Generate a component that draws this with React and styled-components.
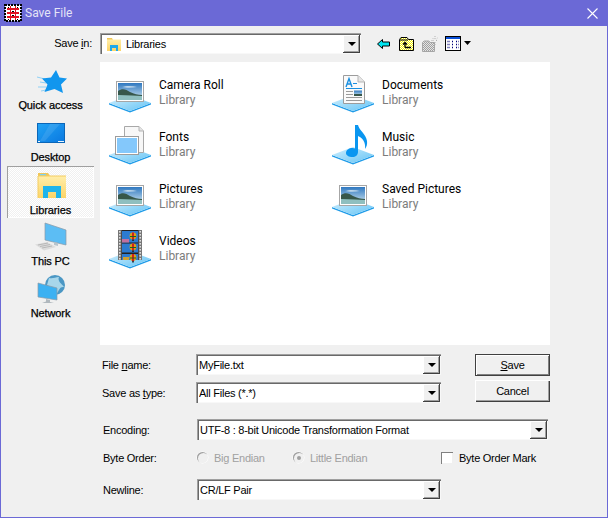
import React from 'react';
import styled, { createGlobalStyle } from 'styled-components';

const GlobalStyle = createGlobalStyle`
  html, body { margin: 0; padding: 0; background: #f0f0f0; }
  * { box-sizing: border-box; }
`;

const UI_FONT = `"Liberation Sans", Arial, sans-serif`;
const LIST_FONT = `Roboto, "Noto Sans", sans-serif`;

const SIDEBAR_ITEMS = [
  { name: 'Quick access', Icon: () => <StarIcon /> },
  { name: 'Desktop', Icon: () => <DesktopIcon /> },
  { name: 'Libraries', Icon: () => <LibraryIcon />, selected: true },
  { name: 'This PC', Icon: () => <PcIcon /> },
  { name: 'Network', Icon: () => <NetworkIcon /> },
];

const LIBRARIES = [
  { name: 'Camera Roll', Art: () => <PictureArt /> },
  { name: 'Documents', Art: () => <DocumentArt /> },
  { name: 'Fonts', Art: () => <FontsArt /> },
  { name: 'Music', Art: () => <MusicArt /> },
  { name: 'Pictures', Art: () => <PictureArt /> },
  { name: 'Saved Pictures', Art: () => <PictureArt /> },
  { name: 'Videos', Art: () => <VideoArt /> },
];

/* shared gradients and dither fills for the drawn icons */
const SharedDefs = () => (
  <Defs>
    <defs>
      <linearGradient id="platformTop" x1="0" y1="0" x2="1" y2="1">
        <stop offset="0" stopColor="#d3f0fd" />
        <stop offset="1" stopColor="#63c3f5" />
      </linearGradient>
      <linearGradient id="sky" x1="0" y1="0" x2="0" y2="1">
        <stop offset="0" stopColor="#2f78c0" />
        <stop offset="1" stopColor="#d5e9f2" />
      </linearGradient>
      <linearGradient id="screen" x1="0" y1="0" x2="1" y2="1">
        <stop offset="0" stopColor="#22a4f5" />
        <stop offset="1" stopColor="#0a78e0" />
      </linearGradient>
      <linearGradient id="folder" x1="0" y1="0" x2="0" y2="1">
        <stop offset="0" stopColor="#ffeeaa" />
        <stop offset="1" stopColor="#fcd467" />
      </linearGradient>
      <pattern id="ditherYellow" width="2" height="2" patternUnits="userSpaceOnUse">
        <rect width="2" height="2" fill="#fff" />
        <rect width="1" height="1" fill="#f2f000" />
        <rect x="1" y="1" width="1" height="1" fill="#f2f000" />
      </pattern>
      <pattern id="ditherGray" width="2" height="2" patternUnits="userSpaceOnUse">
        <rect width="2" height="2" fill="#e4e4e4" />
        <rect width="1" height="1" fill="#a0a0a0" />
        <rect x="1" y="1" width="1" height="1" fill="#a0a0a0" />
      </pattern>
    </defs>
  </Defs>
);

const Platform = () => (
  <>
    <path d="M3 33 L24 41 L45 33 L45 34.5 L24 42.5 L3 34.5 Z" fill="#1f9be8" />
    <path d="M3 33 L24 25 L45 33 L24 41 Z" fill="url(#platformTop)" />
  </>
);

const PictureArt = () => (
  <ItemSvg viewBox="0 0 48 46">
    <Platform />
    <rect x="10.5" y="11.5" width="27" height="20" fill="#fff" stroke="#a6a6a6" />
    <rect x="12" y="13" width="24" height="17" fill="url(#sky)" />
    <path d="M16 17 C20 15.5 26 15.5 31 17 C26 18 20 18 16 17 Z" fill="#e8f2f8" opacity="0.7" />
    <path d="M12 21 C16 18 20 19 24 22 C28 24 32 25 36 25 L36 27 L12 27 Z" fill="#37574a" />
    <path d="M12 25 L26 25.5 L36 26 L36 30 L12 30 Z" fill="#8fbfbf" />
  </ItemSvg>
);

const DocumentArt = () => (
  <ItemSvg viewBox="0 0 48 46">
    <Platform />
    <path d="M14.5 5.5 H29 L35.5 12 V33.5 H14.5 Z" fill="#fafafa" stroke="#9c9c9c" />
    <path d="M29 5.5 V12 H35.5" fill="#e6e6e6" stroke="#b5b5b5" />
    <path d="M17 17 L20 8.5 L23 17 M18 14 H22" fill="none" stroke="#1a8fe0" strokeWidth="1.4" />
    <path d="M24 13.5 H28 M17 18.5 H33" stroke="#1a8fe0" />
    <path d="M17 21.5 H24 M17 24.5 H24 M17 27.5 H33 M17 30.5 H33" stroke="#9a9a9a" />
    <rect x="25" y="20.5" width="8" height="5.5" fill="url(#sky)" />
    <rect x="25" y="24" width="8" height="2" fill="#37574a" />
  </ItemSvg>
);

const FontsArt = () => (
  <ItemSvg viewBox="0 0 48 46">
    <Platform />
    <path d="M18.5 4.5 H33 L37.5 9 V30.5 H18.5 Z" fill="#f7f7f7" stroke="#a8a8a8" />
    <path d="M33 4.5 V9 H37.5" fill="#e4e4e4" stroke="#b5b5b5" />
    <rect x="9.5" y="14.5" width="23" height="18" fill="#fff" stroke="#9c9c9c" />
    <rect x="11" y="16" width="20" height="15" fill="#84c8fb" />
  </ItemSvg>
);

const MusicArt = () => (
  <ItemSvg viewBox="0 0 48 46">
    <Platform />
    <path
      d="M26 3 L29 3 C30 8 37 12 38 19 C38.5 22 37.5 25 36 27 C36.5 23 36 17 29 14 L29 30 C29 33 26.5 35 23.5 35 C20 35 17 33.5 17 31 C17 28 20 26 23.5 26 C24.5 26 25.5 26.2 26 26.5 Z"
      fill="#0a96f0"
    />
  </ItemSvg>
);

const Balloon = ({ x, y }) => (
  <g>
    <circle cx={x} cy={y} r="3.4" fill="#e0a010" />
    <path d={`M${x - 1} ${y - 3.4} h2 v6.8 h-2 Z`} fill="#d02020" />
    <path d={`M${x - 3} ${y} h6 v1 h-6 Z`} fill="#206020" />
    <rect x={x - 0.8} y={y + 3.4} width="1.6" height="1.6" fill="#222" />
  </g>
);

const VideoArt = () => (
  <ItemSvg viewBox="0 0 48 46">
    <Platform />
    <rect x="12" y="4" width="24" height="30" fill="#222" />
    <rect x="12" y="4" width="3.5" height="30" fill="#777" />
    <rect x="32.5" y="4" width="3.5" height="30" fill="#777" />
    {[5, 8, 11, 14, 17, 20, 23, 26, 29, 32].map((y) => (
      <g key={y}>
        <rect x="13" y={y} width="1.6" height="1.6" fill="#ddd" />
        <rect x="33.4" y={y} width="1.6" height="1.6" fill="#ddd" />
      </g>
    ))}
    <rect x="16" y="5" width="16" height="11.5" fill="#2c7bd0" />
    <rect x="16" y="17.5" width="16" height="9" fill="#2c7bd0" />
    <rect x="16" y="28" width="16" height="6" fill="#2c7bd0" />
    <rect x="16" y="13" width="7" height="3.5" fill="#c070a0" />
    <rect x="17" y="31" width="6" height="3" fill="#d0a030" />
    <Balloon x={27} y={10} />
    <Balloon x={27} y={21} />
    <Balloon x={27} y={31.5} />
  </ItemSvg>
);

const StarIcon = () => (
  <SideSvg viewBox="0 0 32 32">
    <path d="M2 11 L10 13 M5 16 L11 17 M3 21 L11 21 M6 25 L11 24" stroke="#8fd0f5" strokeWidth="1" />
    <path
      d="M21 4 L24.5 11.5 L32 12.5 L26 18.5 L28 27 L19.5 23 L9.5 26 L12.5 18.5 L7 12.5 L16 11.5 Z"
      fill="#1196ee"
    />
  </SideSvg>
);

const DesktopIcon = () => (
  <SideSvg viewBox="0 0 32 32">
    <rect x="2.5" y="5.5" width="27" height="19" fill="url(#screen)" stroke="#0b66b8" />
    <path d="M15 6 L25 6 L10 23 L5 23 Z" fill="#fff" opacity="0.1" />
    <path d="M3 23.5 H5 M23 23.5 H29" stroke="#e8f6ff" />
  </SideSvg>
);

const LibraryIcon = () => (
  <SideSvg viewBox="0 0 32 32">
    <path d="M3 3 H13 L15 6 H3 Z" fill="#f0c658" />
    <rect x="5" y="4" width="6" height="1.5" fill="#7fd0f0" />
    <rect x="3" y="6" width="28" height="22" fill="url(#folder)" />
    <path d="M3 28 V6 H31" fill="none" stroke="#f4cc60" />
    <path d="M8 28 V16 H26 V28 H21 V22 H13 V28 Z" fill="#1eb4ec" />
  </SideSvg>
);

const PcIcon = () => (
  <SideSvg viewBox="0 0 32 32">
    <path d="M10 1 L31 8 L31 23 L10 18 Z" fill="#5cbdf4" stroke="#8a9aa6" strokeWidth="0.7" />
    <path d="M19 20 L23 21 L23 24 L19 23 Z" fill="#b8c4cc" />
    <path d="M0 22.5 L12 20 L21 25 L9 28.5 Z" fill="#dcdcdc" />
    <path d="M3 23 L13 21 M5 24.5 L15 22.5 M7 26 L17 24" stroke="#a8a8a8" strokeWidth="0.7" />
  </SideSvg>
);

const NetworkIcon = () => (
  <SideSvg viewBox="0 0 32 32">
    <circle cx="20" cy="11" r="10" fill="#4b97c4" />
    <path d="M14 4 C18 5 20 3 24 3 C22 7 27 10 29 13 C24 12 24 18 21 20 C20 15 15 13 12 11 Z" fill="#a8d6ea" />
    <path d="M3 9 L22 14 L22 26 L3 23 Z" fill="#3cb1f2" stroke="#8d9ba6" strokeWidth="0.7" />
    <path d="M11 25 L15 26 L15 28 L19 29 L7 29 L11 27.5 Z" fill="#b0b8be" />
  </SideSvg>
);

const AppIcon = () => (
  <svg width="18" height="18" viewBox="0 0 18 18" shapeRendering="crispEdges">
    <rect x="1" y="1" width="16" height="16" fill="#fff" />
    <path d="M1 1 H17 V17 H1 Z" fill="none" stroke="#000" strokeWidth="1.6" strokeDasharray="2 1" />
    <path d="M3 5 H15 M3 9 H15 M3 13 H15" stroke="#e01020" strokeWidth="1.5" />
    <path d="M6.5 2 V16 M11.5 2 V16" stroke="#e01020" strokeWidth="1.5" />
    <path d="M4 3 H5 M13 3 H14 M8 7 H10 M8 11 H10 M4 15 H5 M13 15 H14" stroke="#000" />
  </svg>
);

const CloseIcon = () => (
  <svg width="11" height="11" viewBox="0 0 11 11">
    <path d="M0.5 0.5 L10.5 10.5 M10.5 0.5 L0.5 10.5" stroke="#fff" strokeWidth="1.1" />
  </svg>
);

const BackIcon = () => (
  <ToolSvg width="16" height="16" viewBox="0 0 16 16">
    <path d="M1.5 8 L6.5 3.5 V6 H13.5 V10 H6.5 V12.5 Z" fill="#00e5f0" stroke="#000" strokeWidth="1" />
  </ToolSvg>
);

const UpFolderIcon = () => (
  <ToolSvg width="16" height="16" viewBox="0 0 16 16">
    <path d="M0.5 14.5 V3.5 L2 1.5 H8 L9.5 3.5 H14.5 V14.5 Z" fill="url(#ditherYellow)" stroke="#000" />
    <path d="M1 4 H9" stroke="#000" />
    <path d="M6 11.5 H12 M6 11.5 V7 M4 8.5 L6 6.5 L8 8.5" fill="none" stroke="#000" strokeWidth="1.3" />
  </ToolSvg>
);

const NewFolderIcon = () => (
  <ToolSvg width="16" height="16" viewBox="0 0 16 16">
    <path d="M0.5 15.5 V6.5 L2 5 H7 L8 6.5 H12.5 V15.5 Z" fill="url(#ditherGray)" stroke="#a6a6a6" />
    <path d="M13 0 V3 M13 6 V9 M9.5 4.5 H12 M14 4.5 H16 M10.5 2 L12 3.5 M15.5 2 L14 3.5" stroke="#b0b0b0" strokeDasharray="1 1" />
  </ToolSvg>
);

const ViewIcon = () => (
  <ToolSvg width="26" height="16" viewBox="0 0 26 16">
    <rect x="0.5" y="0.5" width="15" height="14" fill="#fff" stroke="#000" />
    <rect x="1" y="1" width="14" height="2" fill="#0a50d8" />
    <path d="M2.5 5.5 H5 M7 5.5 H9 M11 5.5 H13.5 M2.5 8.5 H5 M7 8.5 H9 M11 8.5 H13.5 M2.5 11.5 H5 M7 11.5 H9 M11 11.5 H13.5" stroke="#00007a" strokeDasharray="1 1" strokeWidth="1.4" />
    <path d="M19 5 H26 L22.5 9 Z" fill="#000" />
  </ToolSvg>
);

const SmallFolder = () => (
  <FolderSvg viewBox="0 0 16 16">
    <path d="M1 2 H6 L7 4 H1 Z" fill="#f0c658" />
    <rect x="1" y="3.5" width="14" height="11.5" fill="url(#folder)" />
    <path d="M4 15 V9 H12 V15 H10 V12 H6 V15 Z" fill="#1ea8ec" />
  </FolderSvg>
);

const Combo = ({ width, icon, children }) => (
  <ComboBox $width={width}>
    {icon}
    <ComboText>{children}</ComboText>
    <DropButton>
      <DropArrow />
    </DropButton>
  </ComboBox>
);

const App = () => (
  <Frame>
    <GlobalStyle />
    <SharedDefs />
    <TitleBar>
      <AppIcon />
      <TitleText>Save File</TitleText>
      <CloseButton><CloseIcon /></CloseButton>
    </TitleBar>
    <Body>
      <SaveInRow>
        <SaveInLabel>Save <u>i</u>n:</SaveInLabel>
        <Combo width={261} icon={<SmallFolder />}>Libraries</Combo>
        <Toolbar>
          <BackIcon />
          <UpFolderIcon />
          <NewFolderIcon />
          <ViewIcon />
        </Toolbar>
      </SaveInRow>

      <Main>
        <Sidebar>
          {SIDEBAR_ITEMS.map(({ name, Icon, selected }) => (
            <SideButton key={name} $selected={selected}>
              <Icon />
              <SideLabel $selected={selected}>{name}</SideLabel>
            </SideButton>
          ))}
        </Sidebar>
        <ListPane>
          {LIBRARIES.map(({ name, Art }) => (
            <Item key={name}>
              <Art />
              <ItemText>
                <ItemName>{name}</ItemName>
                <ItemType>Library</ItemType>
              </ItemText>
            </Item>
          ))}
        </ListPane>
      </Main>

      <TopForm>
        <Fields>
          <FieldRow>
            <FieldLabel>File <u>n</u>ame:</FieldLabel>
            <Combo width={245}>MyFile.txt</Combo>
          </FieldRow>
          <FieldRow>
            <FieldLabel>Save as <u>t</u>ype:</FieldLabel>
            <Combo width={245}>All Files (*.*)</Combo>
          </FieldRow>
        </Fields>
        <Buttons>
          <PushButton $isDefault><u>S</u>ave</PushButton>
          <PushButton>Cancel</PushButton>
        </Buttons>
      </TopForm>

      <LowerForm>
        <FieldRow>
          <LowerLabel>Encoding:</LowerLabel>
          <Combo width={351}>UTF-8 : 8-bit Unicode Transformation Format</Combo>
        </FieldRow>
        <ByteRow>
          <LowerLabel>Byte Order:</LowerLabel>
          <Option $width={96}><Radio /><DisabledText>Big Endian</DisabledText></Option>
          <Option $width={148}><Radio $checked /><DisabledText>Little Endian</DisabledText></Option>
          <Option><Checkbox /><OptionText>Byte Order Mark</OptionText></Option>
        </ByteRow>
        <FieldRow>
          <LowerLabel>Newline:</LowerLabel>
          <Combo width={244}>CR/LF Pair</Combo>
        </FieldRow>
      </LowerForm>
    </Body>
  </Frame>
);

const Defs = styled.svg`
  display: block;
  width: 0;
  height: 0;
`;

const Frame = styled.div`
  width: 608px;
  height: 518px;
  display: flex;
  flex-direction: column;
  background: #f0f0f0;
  border: 1px solid #6b69d6;
  border-top: 0;
  overflow: hidden;
  font: 11px ${UI_FONT};
  letter-spacing: -0.25px;
  color: #000;
`;

const TitleBar = styled.div`
  flex: none;
  height: 26px;
  display: flex;
  align-items: center;
  padding-left: 3px;
  background: #6b69d6;
`;

const TitleText = styled.span`
  margin-left: 3px;
  font: 12px ${LIST_FONT};
  letter-spacing: 0;
  color: #e4e4f7;
`;

const CloseButton = styled.div`
  margin-left: auto;
  width: 30px;
  display: flex;
  justify-content: center;
`;

const Body = styled.div`
  flex: 1;
  padding-left: 6px;
`;

const SaveInRow = styled.div`
  height: 36px;
  padding-top: 7px;
  display: flex;
  align-items: flex-start;
`;

const SaveInLabel = styled.div`
  width: 93px;
  height: 21px;
  line-height: 21px;
  padding-right: 8px;
  text-align: right;
`;

const ComboBox = styled.div`
  flex: none;
  width: ${(p) => p.$width}px;
  height: 21px;
  display: flex;
  align-items: center;
  padding: 2px 1px 1px 3px;
  gap: 3px;
  background: #fff;
  box-shadow: inset 1px 1px 0 #a0a0a0, inset 2px 2px 0 #696969, inset -1px -1px 0 #f8f8f8;
`;

const ComboText = styled.span`
  flex: 1;
  white-space: nowrap;
  overflow: hidden;
`;

const FolderSvg = styled.svg`
  flex: none;
  width: 16px;
  height: 16px;
  margin: 0 1px 0 3px;
`;

const DropButton = styled.div`
  flex: none;
  width: 17px;
  height: 100%;
  display: flex;
  align-items: center;
  justify-content: center;
  background: #f0f0f0;
  box-shadow: inset -1px -1px 0 #404040, inset 1px 1px 0 #fff, inset -2px -2px 0 #a0a0a0;
`;

const DropArrow = styled.span`
  width: 0;
  height: 0;
  border-left: 4px solid transparent;
  border-right: 4px solid transparent;
  border-top: 4px solid #000;
`;

const Toolbar = styled.div`
  display: flex;
  gap: 7px;
  margin: 3px 0 0 15px;
`;

const ToolSvg = styled.svg`
  display: block;
  flex: none;
`;

const Main = styled.div`
  display: flex;
  height: 283px;
`;

const Sidebar = styled.div`
  flex: none;
  width: 93px;
`;

const SideButton = styled.div`
  width: 87px;
  height: 52px;
  padding-top: 4px;
  display: flex;
  flex-direction: column;
  align-items: center;
  background: ${(p) =>
    p.$selected
      ? 'repeating-conic-gradient(#ffffff 0 25%, #f0f0f0 0 50%) 0 0 / 2px 2px'
      : 'transparent'};
  box-shadow: ${(p) =>
    p.$selected ? 'inset 1px 1px 0 #a0a0a0, inset -1px -1px 0 #fff' : 'none'};
`;

const SideSvg = styled.svg`
  display: block;
  flex: none;
  width: 32px;
  height: 32px;
`;

const SideLabel = styled.span`
  margin-top: ${(p) => (p.$selected ? 1 : 0)}px;
  font: 11px/14px ${UI_FONT};
  letter-spacing: -0.1px;
  -webkit-text-stroke: 0.25px #000;
`;

const ListPane = styled.div`
  flex: none;
  width: 450px;
  height: 283px;
  padding: 8px 0 0 6px;
  background: #fff;
  display: grid;
  grid-template-columns: 223px 221px;
  grid-auto-rows: 52px;
`;

const Item = styled.div`
  display: flex;
  align-items: flex-start;
`;

const ItemSvg = styled.svg`
  display: block;
  flex: none;
  width: 48px;
  height: 46px;
`;

const ItemText = styled.div`
  margin: 8px 0 0 5px;
  font: 12px/15px ${LIST_FONT};
  letter-spacing: 0;
`;

const ItemName = styled.div`
  color: #000;
`;

const ItemType = styled.div`
  color: #7c7c7c;
`;

const TopForm = styled.div`
  display: flex;
  margin: 9px 0 0 95px;
`;

const Fields = styled.div`
  flex: none;
  width: 339px;
  display: flex;
  flex-direction: column;
  gap: 7px;
`;

const FieldRow = styled.div`
  display: flex;
  align-items: center;
  height: 21px;
`;

const FieldLabel = styled.div`
  flex: none;
  width: 94px;
`;

const Buttons = styled.div`
  flex: none;
  margin-left: 34px;
  display: flex;
  flex-direction: column;
  gap: 4px;
`;

const PushButton = styled.div`
  width: 75px;
  height: 22px;
  display: flex;
  align-items: center;
  justify-content: center;
  background: #f0f0f0;
  box-shadow: ${(p) =>
    p.$isDefault
      ? 'inset 0 0 0 1px #404040, inset 2px 2px 0 #fff, inset -2px -2px 0 #808080'
      : 'inset 1px 1px 0 #fff, inset -1px -1px 0 #404040, inset -2px -2px 0 #a0a0a0'};
`;

const LowerForm = styled.div`
  margin: 16px 0 0 96px;
`;

const LowerLabel = styled.div`
  flex: none;
  width: 94px;
`;

const ByteRow = styled(FieldRow)`
  margin: 7px 0 11px;
`;

const Option = styled.div`
  flex: none;
  width: ${(p) => (p.$width ? `${p.$width}px` : 'auto')};
  display: flex;
  align-items: center;
  gap: 6px;
`;

const Radio = styled.span`
  position: relative;
  flex: none;
  width: 11px;
  height: 11px;
  border-radius: 50%;
  background: #f0f0f0;
  box-shadow: inset 1px 1px 0 #a0a0a0, 0 0 0 0.5px #fff;
  &::after {
    content: '';
    display: ${(p) => (p.$checked ? 'block' : 'none')};
    position: absolute;
    left: 3.5px;
    top: 3.5px;
    width: 4px;
    height: 4px;
    border-radius: 50%;
    background: #a0a0a0;
  }
`;

const Checkbox = styled.span`
  flex: none;
  width: 12px;
  height: 12px;
  background: #fff;
  box-shadow: inset 1px 1px 0 #808080, inset -1px -1px 0 #f0f0f0;
`;

const OptionText = styled.span`
  white-space: nowrap;
`;

const DisabledText = styled.span`
  color: #a0a0a0;
  white-space: nowrap;
`;

export default App;
